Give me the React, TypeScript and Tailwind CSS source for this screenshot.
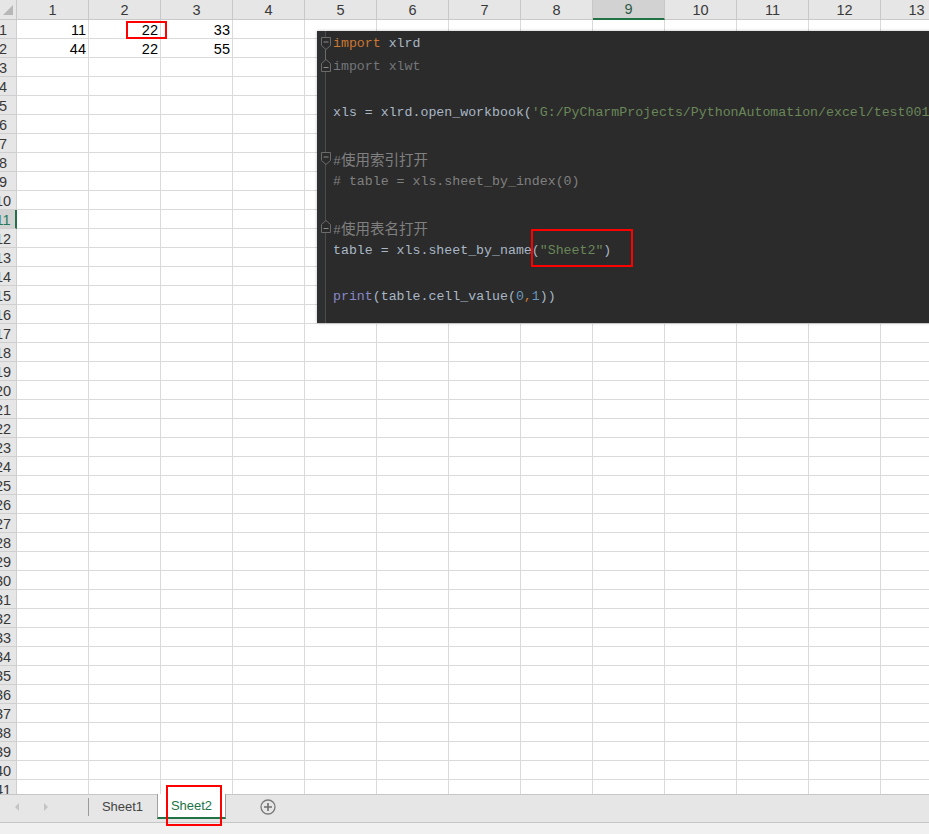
import React from "react";

const cols = Array.from({ length: 14 }, (_, i) => i + 1);
const rows = Array.from({ length: 42 }, (_, i) => i + 1);

const data: Record<number, Record<number, string>> = {
  1: { 1: "11", 2: "22", 3: "33" },
  2: { 1: "44", 2: "22", 3: "55" },
};

const cjk = "text-[14.5px] [font-family:'Noto_Sans_CJK_SC',sans-serif]";

function Fold({ up }: { up?: boolean }) {
  return (
    <svg width="12" height="14" viewBox="0 0 12 14" className="block">
      {up ? (
        <path d="M1.5 13.5 V5.5 L6 1.5 L10.5 5.5 V13.5 Z" fill="#2b2b2b" stroke="#6b6b6b" />
      ) : (
        <path d="M1.5 0.5 H10.5 V8.5 L6 12.5 L1.5 8.5 Z" fill="#2b2b2b" stroke="#6b6b6b" />
      )}
      <path d={up ? "M3.5 9.5 H8.5" : "M3.5 5 H8.5"} stroke="#8a8a8a" />
    </svg>
  );
}

function Editor() {
  const lines: React.ReactNode[] = [
    <>
      <span className="text-[#cc7832]">import</span> xlrd
    </>,
    <span className="text-[#74767a]">import xlwt</span>,
    "",
    <>
      xls = xlrd.open_workbook(<span className="text-[#6a8759]">'G:/PyCharmProjects/PythonAutomation/excel/test001.xlsx'</span>)
    </>,
    "",
    <span className="text-[#808080]">
      #<span className={cjk}>使用索引打开</span>
    </span>,
    <span className="text-[#808080]"># table = xls.sheet_by_index(0)</span>,
    "",
    <span className="text-[#808080]">
      #<span className={cjk}>使用表名打开</span>
    </span>,
    <>
      table = xls.sheet_by_name(<span className="text-[#6a8759]">"Sheet2"</span>)
    </>,
    "",
    <>
      <span className="text-[#8888c6]">print</span>(table.cell_value(<span className="text-[#6897bb]">0</span>
      <span className="text-[#cc7832]">,</span>
      <span className="text-[#6897bb]">1</span>))
    </>,
  ];
  return (
    <div className="absolute left-[317px] top-[31px] w-[620px] h-[292px] bg-[#2b2b2b] flex overflow-hidden shadow-[0_0_3px_rgba(0,0,0,0.25)]">
      <div className="w-[8px] shrink-0 bg-[#2e2f30]" />
      <div className="relative w-px shrink-0 bg-[#4d4d4d]">
        <div className="absolute left-[-5px] top-[6px]"><Fold /></div>
        <div className="absolute left-0 top-[19px] w-px h-[10px] bg-[#6b6b6b]" />
        <div className="absolute left-[-5px] top-[27px]"><Fold up /></div>
        <div className="absolute left-[-5px] top-[121px]"><Fold /></div>
        <div className="absolute left-[-5px] top-[188px]"><Fold up /></div>
      </div>
      <div className="pl-[7px] pt-px shrink-0 text-[13.25px] leading-[23px] text-[#a9b7c6] whitespace-pre [font-family:'Liberation_Mono',monospace]">
        {lines.map((l, i) => (
          <div key={i} className="h-[23px]">{l}</div>
        ))}
      </div>
    </div>
  );
}

function Grid() {
  return (
    <div className="h-[794px] overflow-hidden bg-white">
      <div className="flex h-[20px]">
        <div className="w-[17px] shrink-0 bg-[#e6e6e6] border-r border-b border-[#c8c8c8] relative">
          <svg width="17" height="19" className="absolute left-0 top-0">
            <path d="M13 5 V15 H3 Z" fill="#b7b7b7" />
          </svg>
        </div>
        {cols.map((c) => (
          <div
            key={c}
            className={`w-[72px] shrink-0 flex items-center justify-center border-r border-[#c8c8c8] text-[14.5px] pt-[2px] ${
              c === 9
                ? "bg-[#d2d2d2] border-b-2 border-b-[#217346] text-[#2e5a44]"
                : "bg-[#e6e6e6] border-b text-[#383838]"
            }`}
          >
            {c}
          </div>
        ))}
      </div>
      {rows.map((r) => (
        <div key={r} className="flex h-[19px]">
          <div
            className={`w-[17px] shrink-0 flex overflow-hidden border-b border-[#cfcfcf] text-[14.5px] ${
              r === 11 ? "bg-[#d2d2d2] border-r-2 border-r-[#217346] text-[#237a5a]" : "bg-[#e6e6e6] border-r text-[#383838]"
            }`}
          >
            <div className="w-[6px] shrink-0 flex justify-center items-end leading-[15px] whitespace-nowrap">{r}</div>
          </div>
          {cols.map((c) => (
            <div
              key={c}
              className="w-[72px] shrink-0 border-r border-b border-[#dadada] flex items-end justify-end pr-[2px] leading-[15px] text-[14.5px] text-black"
            >
              {data[r]?.[c] ?? ""}
            </div>
          ))}
        </div>
      ))}
    </div>
  );
}

function Tabs() {
  return (
    <div className="h-[29px] bg-[#e6e6e6] border-t border-b border-[#c6c6c6] flex items-start text-[13px]">
      <div className="w-[88px] h-[23px] flex items-center shrink-0">
        <svg width="6" height="8" className="ml-[14px]">
          <path d="M5 0 V8 L1 4 Z" fill="#c4c4c4" />
        </svg>
        <svg width="6" height="8" className="ml-[23px]">
          <path d="M1 0 V8 L5 4 Z" fill="#c4c4c4" />
        </svg>
      </div>
      <div className="w-[69px] h-[23px] shrink-0 flex items-center justify-center relative text-[#444]">
        <div className="absolute left-0 top-[3px] h-[18px] w-px bg-[#9a9a9a]" />
        Sheet1
      </div>
      <div className="w-[69px] h-[25px] -mt-px shrink-0 bg-white border-l border-r border-[#a0a0a0] border-b-2 border-b-[#217346] flex items-center justify-center text-[#217346] pt-[1px]">
        Sheet2
      </div>
      <div className="ml-[34px] h-[23px] flex items-center">
        <svg width="16" height="16" viewBox="0 0 16 16">
          <circle cx="8" cy="8" r="7" fill="none" stroke="#7a7a7a" strokeWidth="1.3" />
          <path d="M8 4 V12 M4 8 H12" stroke="#6f6f6f" strokeWidth="1.6" />
        </svg>
      </div>
    </div>
  );
}

export default function App() {
  return (
    <div className="relative w-full h-[834px] overflow-hidden bg-[#f3f3f3] [font-family:'Liberation_Sans',Arial,sans-serif]">
      <Grid />
      <Tabs />
      <div className="h-[11px] bg-[#f0f0f0]" />

      <Editor />

      <div className="absolute left-[126px] top-[21px] w-[41px] h-[18px] border-2 border-[#ff0000]" />
      <div className="absolute left-[531px] top-[229px] w-[102px] h-[38px] border-2 border-[#ff0000]" />
      <div className="absolute left-[166px] top-[785px] w-[56px] h-[41px] border-2 border-[#ff0000]" />
    </div>
  );
}
